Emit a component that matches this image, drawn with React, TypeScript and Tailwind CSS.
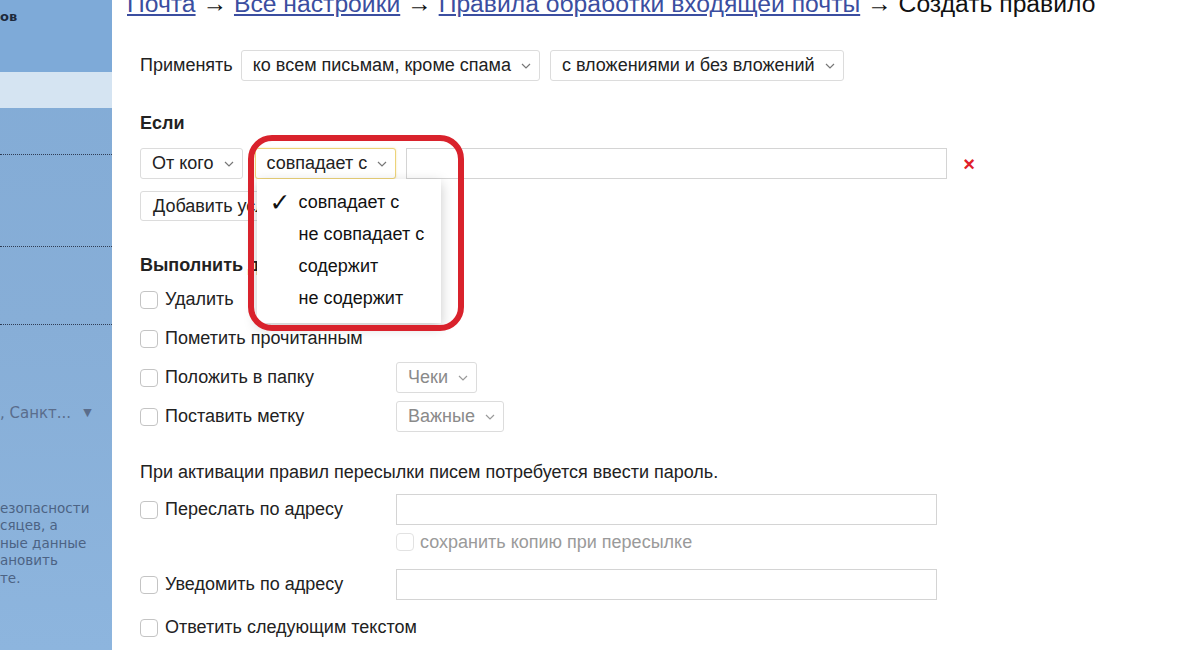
import React from "react";

const Chevron = ({ color = "#777" }: { color?: string }) => (
    <svg width="10" height="6" viewBox="0 0 10 6" className="shrink-0">
        <path d="M1 1 L5 5 L9 1" fill="none" stroke={color} strokeWidth="1.2" />
    </svg>
);

const Select = ({ label, muted, focused, className = "" }: { label: string; muted?: boolean; focused?: boolean; className?: string }) => (
    <div
        className={`flex h-[31px] items-center gap-[10px] whitespace-nowrap rounded-[3px] border bg-white pl-[11px] pr-[8px] ${
            focused ? "border-[#ecd37a] shadow-[0_0_2px_rgba(240,200,80,0.5)]" : "border-[#dcdcdc]"
        } ${muted ? "text-[#8a8a8a]" : "text-[#222]"} ${className}`}
    >
        <span>{label}</span>
        <Chevron color={muted ? "#9a9a9a" : "#777"} />
    </div>
);

const Checkbox = ({ faded }: { faded?: boolean }) => (
    <span className={`inline-block h-[18px] w-[18px] shrink-0 rounded-[4px] border bg-white ${faded ? "border-[#e2e2e2]" : "border-[#c4c4c4]"}`} />
);

const CheckRow = ({ label, children }: { label: string; children?: React.ReactNode }) => (
    <div className="flex h-[31px] items-center">
        <div className="flex w-[256px] shrink-0 items-center gap-[7px] whitespace-nowrap">
            <Checkbox />
            <span>{label}</span>
        </div>
        {children}
    </div>
);

const Sidebar = () => (
    <aside className="relative h-[650px] w-[112px] shrink-0 overflow-hidden bg-gradient-to-b from-[#82abd6] via-[#87aed7] to-[#8db5de] font-['DejaVu_Sans',sans-serif] text-[#2a3d5c]">
        <div className="h-[72px] bg-[#7eaad8] pt-[7px] text-[13px] font-bold text-[#1e2a3d]">ов</div>
        <div className="h-[36px] bg-[#d5e4f2]" />
        <div className="h-[46px]" />
        <div className="border-t border-dotted border-[#2f3d55]" />
        <div className="h-[91px]" />
        <div className="border-t border-dotted border-[#2f3d55]" />
        <div className="h-[77px]" />
        <div className="border-t border-dotted border-[#2f3d55]" />
        <div className="mt-[77px] flex items-center text-[15px] text-[#5a6d8c]">
            <span>, Санкт...</span>
            <span className="ml-[12px] text-[11px]">▼</span>
        </div>
        <div className="mt-[75px] text-[13.5px] leading-[17.5px] text-[#4c6384]">
            <div>езопасности</div>
            <div>сяцев, а</div>
            <div>ные данные</div>
            <div>ановить</div>
            <div>те.</div>
        </div>
    </aside>
);

const App = () => {
    const options = ["совпадает с", "не совпадает с", "содержит", "не содержит"];

    return (
        <div className="flex h-[650px] w-[1177px] overflow-hidden bg-white text-[18px] text-[#222] font-['Liberation_Sans',Arial,sans-serif]">
            <Sidebar />

            <main className="flex flex-1 flex-col pl-[15px]">
                <h1 className="mt-[-8px] whitespace-nowrap text-[24.7px] leading-[24px] text-[#111]">
                    <a className="text-[#3b4ea0] underline">Почта</a> → <a className="text-[#3b4ea0] underline">Все настройки</a> →{" "}
                    <a className="text-[#3b4ea0] underline">Правила обработки входящей почты</a> → Создать правило
                </h1>

                <div className="pl-[13px]">
                    <div className="mt-[34px] flex items-center">
                        <span className="mr-[8px]">Применять</span>
                        <Select label="ко всем письмам, кроме спама" />
                        <Select label="с вложениями и без вложений" className="ml-[10px]" />
                    </div>

                    <div className="mt-[32px] font-bold leading-[20px]">Если</div>

                    <div className="mt-[15px] flex items-center">
                        <Select label="От кого" />
                        <div className="relative ml-[12px]">
                            <Select label="совпадает с" focused />
                            <div className="absolute left-[2px] top-[31px] z-10 w-[184px] bg-white pb-[9px] pt-[7px] shadow-[0_4px_12px_rgba(0,0,0,0.22)]">
                                {options.map((o, i) => (
                                    <div key={o} className="flex h-[32px] items-center whitespace-nowrap">
                                        <span className="w-[42px] pl-[13px] font-['DejaVu_Sans',sans-serif] text-[25px] leading-none text-[#111]">
                                            {i === 0 ? "✓" : ""}
                                        </span>
                                        <span className="text-[#111]">{o}</span>
                                    </div>
                                ))}
                            </div>
                            <div className="pointer-events-none absolute left-[-7px] top-[-13px] z-20 h-[196px] w-[216px] rounded-[24px] border-[6px] border-[#d9222c]" />
                        </div>
                        <div className="ml-[10px] h-[31px] w-[541px] border border-[#d4d4d4]" />
                        <span className="ml-[16px] text-[20px] font-bold text-[#e0202a]">×</span>
                    </div>

                    <div className="mt-[12px] flex">
                        <div className="flex h-[30px] items-center whitespace-nowrap rounded-[3px] border border-[#dcdcdc] px-[12px]">Добавить условие</div>
                    </div>

                    <div className="mt-[34px] font-bold leading-[20px]">Выполнить действие</div>

                    <div className="mt-[9px] flex flex-col gap-[8px]">
                        <CheckRow label="Удалить" />
                        <CheckRow label="Пометить прочитанным" />
                        <CheckRow label="Положить в папку">
                            <Select label="Чеки" muted />
                        </CheckRow>
                        <CheckRow label="Поставить метку">
                            <Select label="Важные" muted />
                        </CheckRow>
                    </div>

                    <div className="mt-[30px] whitespace-nowrap leading-[20px]">При активации правил пересылки писем потребуется ввести пароль.</div>

                    <div className="mt-[12px]">
                        <CheckRow label="Переслать по адресу">
                            <div className="h-[31px] w-[541px] border border-[#d4d4d4]" />
                        </CheckRow>
                    </div>
                    <div className="mt-[7px] flex h-[20px] items-center gap-[6px] whitespace-nowrap pl-[256px] text-[#9a9a9a]">
                        <Checkbox faded />
                        <span>сохранить копию при пересылке</span>
                    </div>

                    <div className="mt-[17px]">
                        <CheckRow label="Уведомить по адресу">
                            <div className="h-[31px] w-[541px] border border-[#d4d4d4]" />
                        </CheckRow>
                    </div>

                    <div className="mt-[12px]">
                        <CheckRow label="Ответить следующим текстом" />
                    </div>
                </div>
            </main>
        </div>
    );
};

export default App;
